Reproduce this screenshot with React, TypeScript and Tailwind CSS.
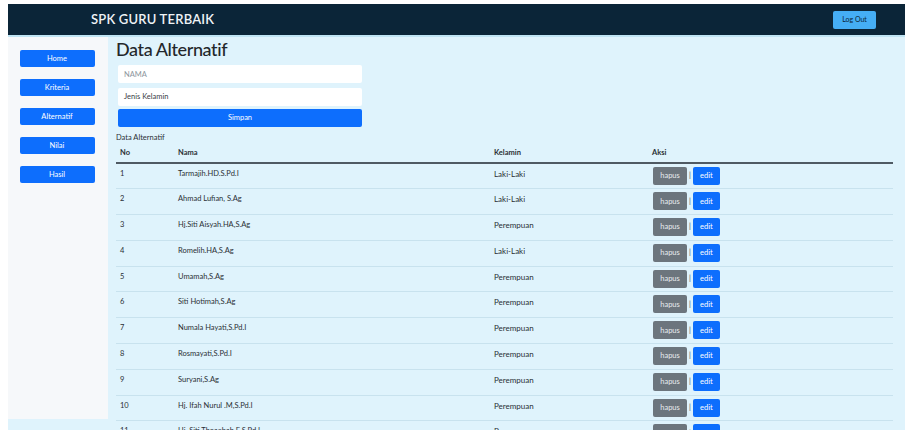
const menu = ["Home", "Kriteria", "Alternatif", "Nilai", "Hasil"];

const alternatif = [
  { no: 1, nama: "Tarmajih.HD.S.Pd.I", kelamin: "Laki-Laki" },
  { no: 2, nama: "Ahmad Lufian, S.Ag", kelamin: "Laki-Laki" },
  { no: 3, nama: "Hj.Siti Aisyah.HA,S.Ag", kelamin: "Perempuan" },
  { no: 4, nama: "Romelih.HA,S.Ag", kelamin: "Laki-Laki" },
  { no: 5, nama: "Umamah,S.Ag", kelamin: "Perempuan" },
  { no: 6, nama: "Siti Hotimah,S.Ag", kelamin: "Perempuan" },
  { no: 7, nama: "Numala Hayati,S.Pd.I", kelamin: "Perempuan" },
  { no: 8, nama: "Rosmayati,S.Pd.I", kelamin: "Perempuan" },
  { no: 9, nama: "Suryani,S.Ag", kelamin: "Perempuan" },
  { no: 10, nama: "Hj. Ifah Nurul .M,S.Pd.I", kelamin: "Perempuan" },
  { no: 11, nama: "Hj. Siti Thoaebah.E.S.Pd.I", kelamin: "Perempuan" },
];

const App = () => {
  return (
    <div className="min-h-screen bg-white pl-[8px] pt-[4px] font-['Lato',sans-serif] text-[#2a2f34]">
      {/* Navbar */}
      <nav className="flex h-[33px] items-center justify-between bg-[#0b2538] pl-[83px] pr-[29px] border-b-2 border-[#bfe4f3]">
        <span className="text-[13px] font-semibold tracking-[0.2px] text-[#eef3f6]">SPK GURU TERBAIK</span>
        <button className="h-[18px] w-[43px] rounded-[2px] bg-[#45aef5] text-[7px] text-[#0b2538]">Log Out</button>
      </nav>

      <div className="flex bg-[#dff3fc]">
        {/* Sidebar */}
        <aside className="flex h-[382px] w-[100px] shrink-0 flex-col items-center gap-[12px] bg-[#f6f8fa] pt-[13px] pr-[2px]">
          {menu.map((item) => (
            <button
              key={item}
              className="h-[17px] w-[75px] rounded-[2px] bg-[#0d6efd] text-[7.5px] text-white"
            >
              {item}
            </button>
          ))}
        </aside>

        {/* Main content */}
        <main className="flex-1 pl-[8px] pr-[12px]">
          <h1 className="text-[18px] leading-[24px] font-medium tracking-[-0.4px] text-[#23272b]">Data Alternatif</h1>

          <div className="ml-[2px] mt-[4px] flex w-[244px] flex-col gap-[5px]">
            <input
              placeholder="NAMA"
              className="h-[18px] rounded-[2px] bg-white px-[6px] text-[7.5px] placeholder:text-[#8c959c] outline-none"
            />
            <div className="flex h-[18px] items-center rounded-[2px] bg-white px-[6px] text-[7.5px] text-[#3a4046]">
              Jenis Kelamin
            </div>
            <button className="-mt-[2px] h-[18px] rounded-[2px] bg-[#0d6efd] text-[7.5px] text-white">Simpan</button>
          </div>

          <div className="mt-[6px] text-[7.5px] leading-[10px]">Data Alternatif</div>

          <table className="w-full border-collapse text-[7.5px]">
            <thead>
              <tr className="border-b-2 border-[#4f5a63]">
                <th className="h-[20px] w-[56px] pl-[4px] text-left font-bold">No</th>
                <th className="w-[316px] pl-[6px] text-left font-bold">Nama</th>
                <th className="w-[158px] pl-[6px] text-left font-bold">Kelamin</th>
                <th className="pl-[6px] text-left font-bold">Aksi</th>
              </tr>
            </thead>
            <tbody>
              {alternatif.map((row) => (
                <tr key={row.no} className="border-b border-[#c8e2ee]">
                  <td className="h-[25.8px] pl-[4px] pt-[4px] align-top">{row.no}</td>
                  <td className="pl-[6px] pt-[4px] align-top">{row.nama}</td>
                  <td className="pl-[6px] pt-[4px] align-top text-[8px]">{row.kelamin}</td>
                  <td className="pl-[7px] pt-[3px] align-top">
                    <div className="flex items-center gap-[2px]">
                      <button className="h-[18px] w-[34px] rounded-[2px] bg-[#6c757d] text-[7.5px] text-[#e9ecef]">hapus</button>
                      <span className="text-[#495057]">|</span>
                      <button className="h-[18px] w-[27px] rounded-[2px] bg-[#0d6efd] text-[7.5px] text-white">edit</button>
                    </div>
                  </td>
                </tr>
              ))}
            </tbody>
          </table>
        </main>
      </div>
    </div>
  );
};

export default App;
